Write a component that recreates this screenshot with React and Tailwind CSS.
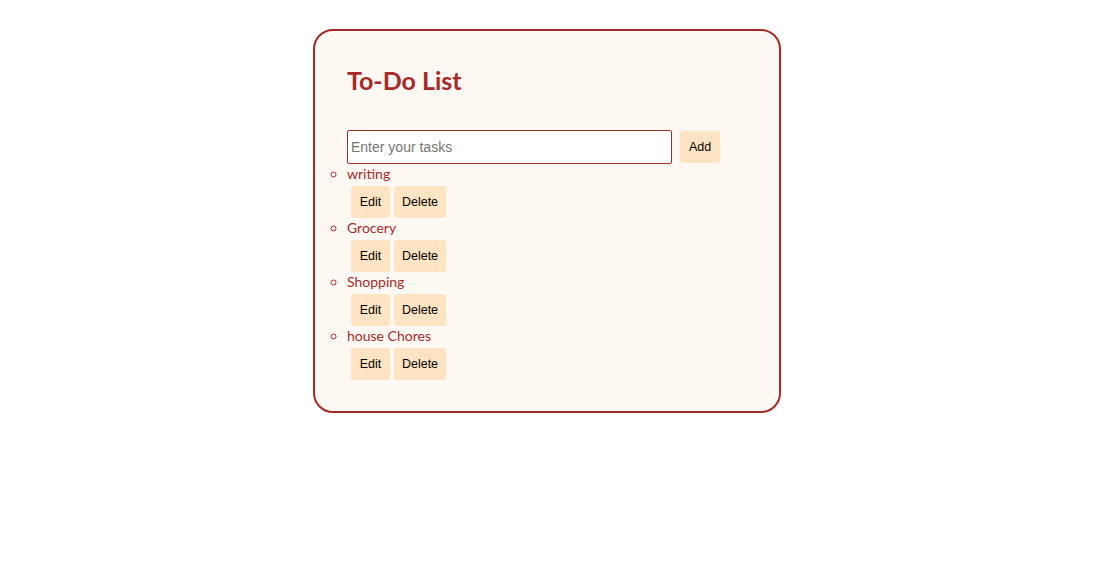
export default function App() {
  const tasks = ["writing", "Grocery", "Shopping", "house Chores"];
  return (
    <div className="w-[1107px] h-[584px] bg-white">
      <div className="pt-[29px] pl-[313px]">
        <div className="w-[468px] h-[384px] rounded-[20px] border-2 border-[#a52a2a] bg-[#fdf8f2] px-[32px] pt-[32px] pb-[31px]">
          <h2 className="h-[33px] leading-[34px] text-[25px] font-bold text-[#a52a2a] font-['Lato',sans-serif]">
            To-Do List
          </h2>
          <div className="mt-[34px] flex items-center">
            <input
              className="w-[325px] h-[34px] border border-[#a52a2a] rounded-[2px] bg-white px-[3px] text-[14px] font-['Liberation_Sans',Arial,sans-serif] placeholder:text-[#757575] outline-none"
              placeholder="Enter your tasks"
            />
            <button className="ml-[8px] w-[40px] h-[32px] rounded-[3px] bg-[#ffe4c4] text-[12.5px] text-black font-['Liberation_Sans',Arial,sans-serif]">
              Add
            </button>
          </div>
          <ul className="list-[circle] marker:text-[#a52a2a]">
            {tasks.map((t) => (
              <li key={t} className="text-[#a52a2a] font-['Lato',sans-serif] text-[14px] leading-[20px]">
                <div className="h-[20px] leading-[19px]">{t}</div>
                <div className="mt-[2px] ml-[4px] flex gap-[4px] h-[32px]">
                  <button className="w-[39px] h-[32px] rounded-[3px] bg-[#ffe4c4] text-[12.5px] text-black font-['Liberation_Sans',Arial,sans-serif]">
                    Edit
                  </button>
                  <button className="w-[52px] h-[32px] rounded-[3px] bg-[#ffe4c4] text-[12.5px] text-black font-['Liberation_Sans',Arial,sans-serif]">
                    Delete
                  </button>
                </div>
              </li>
            ))}
          </ul>
        </div>
      </div>
    </div>
  );
}
